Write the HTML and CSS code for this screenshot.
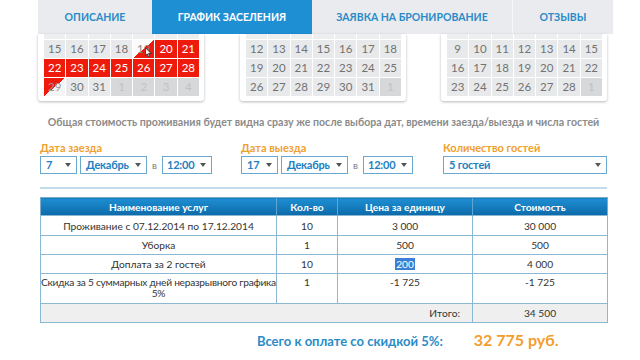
FILE: index.html
```html
<!DOCTYPE html>
<html lang="ru">
<head>
<meta charset="utf-8">
<title>График заселения</title>
<link rel="stylesheet" href="styles.css">
</head>
<body>
<div class="page">
  <nav class="tabs">
    <div class="tab t1">Описание</div>
    <div class="tab t2 active">График заселения</div>
    <div class="tab t3">Заявка на бронирование</div>
    <div class="tab t4">Отзывы</div>
  </nav>

  <div class="cals">
    <div class="cal">
      <div class="grid">
        <span class="d top"></span><span class="d top"></span><span class="d top"></span><span class="d top"></span><span class="d top"></span><span class="d top"></span><span class="d top"></span>
        <span class="d">15</span><span class="d">16</span><span class="d">17</span><span class="d">18</span><span class="d in">19<svg class="cursor" viewBox="0 0 8 12" width="7" height="11"><path d="M0.5 0.5 L0.5 9.5 L2.6 7.6 L4 11 L5.4 10.4 L4 7.2 L7 7.2 Z" fill="#fff" stroke="#222" stroke-width="0.9" stroke-linejoin="round"/></svg></span><span class="d busy">20</span><span class="d busy">21</span>
        <span class="d busy">22</span><span class="d busy">23</span><span class="d busy">24</span><span class="d busy">25</span><span class="d busy">26</span><span class="d busy">27</span><span class="d busy">28</span>
        <span class="d out">29</span><span class="d">30</span><span class="d">31</span><span class="d other">1</span><span class="d other">2</span><span class="d other">3</span><span class="d other">4</span>
      </div>
    </div>
    <div class="cal cal2">
      <div class="grid">
        <span class="d top"></span><span class="d top"></span><span class="d top"></span><span class="d top"></span><span class="d top"></span><span class="d top"></span><span class="d top"></span>
        <span class="d">12</span><span class="d">13</span><span class="d">14</span><span class="d">15</span><span class="d">16</span><span class="d">17</span><span class="d">18</span>
        <span class="d">19</span><span class="d">20</span><span class="d">21</span><span class="d">22</span><span class="d">23</span><span class="d">24</span><span class="d">25</span>
        <span class="d">26</span><span class="d">27</span><span class="d">28</span><span class="d">29</span><span class="d">30</span><span class="d">31</span><span class="d other">1</span>
      </div>
    </div>
    <div class="cal cal3">
      <div class="grid">
        <span class="d top"></span><span class="d top"></span><span class="d top"></span><span class="d top"></span><span class="d top"></span><span class="d top"></span><span class="d top"></span>
        <span class="d">9</span><span class="d">10</span><span class="d">11</span><span class="d">12</span><span class="d">13</span><span class="d">14</span><span class="d">15</span>
        <span class="d">16</span><span class="d">17</span><span class="d">18</span><span class="d">19</span><span class="d">20</span><span class="d">21</span><span class="d">22</span>
        <span class="d">23</span><span class="d">24</span><span class="d">25</span><span class="d">26</span><span class="d">27</span><span class="d">28</span><span class="d other">1</span>
      </div>
    </div>
  </div>

  <div class="content">
    <p class="note">Общая стоимость проживания будет видна сразу же после выбора дат, времени заезда/выезда и числа гостей</p>

    <div class="form">
      <div class="group g1">
        <div class="label">Дата заезда</div>
        <div class="fields">
          <div class="sel s-day">7</div>
          <div class="sel s-month">Декабрь</div>
          <span class="at">в</span>
          <div class="sel s-time">12:00</div>
        </div>
      </div>
      <div class="group g2">
        <div class="label">Дата выезда</div>
        <div class="fields">
          <div class="sel s-day">17</div>
          <div class="sel s-month">Декабрь</div>
          <span class="at">в</span>
          <div class="sel s-time">12:00</div>
        </div>
      </div>
      <div class="group g3">
        <div class="label">Количество гостей</div>
        <div class="fields">
          <div class="sel s-guests">5 гостей</div>
        </div>
      </div>
    </div>

    <div class="rule"></div>

    <table class="price">
      <thead>
        <tr><th class="c1">Наименование услуг</th><th class="c2">Кол-во</th><th class="c3">Цена за единицу</th><th class="c4">Стоимость</th></tr>
      </thead>
      <tbody>
        <tr class="r1"><td>Проживание с 07.12.2014 по 17.12.2014</td><td>10</td><td>3 000</td><td>30 000</td></tr>
        <tr class="r2"><td>Уборка</td><td>1</td><td>500</td><td>500</td></tr>
        <tr class="r2"><td>Доплата за 2 гостей</td><td>10</td><td><span class="hl">200</span></td><td>4 000</td></tr>
        <tr class="r4"><td class="wrap">Скидка за 5 суммарных дней неразрывного графика 5%</td><td>1</td><td>-1 725</td><td>-1 725</td></tr>
        <tr class="total"><td colspan="3" class="tlabel">Итого:</td><td>34 500</td></tr>
      </tbody>
    </table>

    <div class="sum">
      <span class="sum-label">Всего к оплате со скидкой 5%:</span>
      <span class="sum-value">32 775 руб.</span>
    </div>
  </div>
</div>
</body>
</html>
```

FILE: styles.css
```css
* { box-sizing: border-box; }
html, body { margin: 0; padding: 0; }
body {
  width: 640px;
  height: 360px;
  overflow: hidden;
  background: #fff;
  font-family: "Lato", "Noto Sans", sans-serif;
  color: #333;
}
.page { width: 640px; }

/* tabs */
.tabs {
  display: flex;
  margin-left: 38px;
  width: 575px;
  height: 34px;
  background: #e9ebee;
}
.tab {
  height: 34px;
  line-height: 34px;
  text-align: center;
  text-transform: uppercase;
  font-weight: 700;
  font-size: 10.5px;
  color: #2b8bc9;
}
.t1 { width: 114px; }
.t2 { width: 160px; }
.t3 { width: 201px; border-right: 1px solid #f6f7f8; }
.t4 { width: 100px; }
.tab.active { background: #1f8fd4; color: #fff; }

/* calendars */
.cals {
  display: flex;
  margin-left: 38px;
}
.cal {
  width: 166px;
  padding: 0 5px 5px 6px;
  background: #fff;
  box-shadow: 0 1px 3px rgba(0, 0, 0, 0.28);
  border-radius: 0 0 3px 3px;
}
.cal2 { margin-left: 36px; }
.cal3 { margin-left: 35px; }
.grid {
  display: grid;
  grid-template-columns: repeat(7, 1fr);
  grid-template-rows: 5px repeat(3, 18px);
  gap: 1px;
}
.d {
  position: relative;
  background: #e8e9eb;
  color: #727272;
  font-size: 11.5px;
  line-height: 18px;
  text-align: center;
}
.d.top { background: #eceef0; }
.d.busy { background: #ee1b0c; color: #fff; }
.d.other { background: #d7d8da; color: #c2c2c2; }
.d.in { background: linear-gradient(to bottom right, #fbfbfb 50%, #ee1b0c 50%); color: #888; }
.d.out { background: linear-gradient(to bottom right, #ee1b0c 50%, #f4f4f4 50%); color: #999; }
.cursor {
  position: absolute;
  left: 12px;
  top: 7px;
}

/* content */
.content {
  margin-left: 40px;
  width: 567px;
}
.note {
  margin: 14px 0 0;
  text-align: center;
  font-size: 10.6px;
  line-height: 14px;
  font-weight: 700;
  color: #8b8b8b;
  white-space: nowrap;
}
.form {
  display: flex;
  margin-top: 12px;
}
.g1 { width: 201px; }
.g2 { width: 202px; }
.g3 { width: 164px; }
.label {
  font-size: 11px;
  line-height: 14px;
  font-weight: 700;
  color: #f0a02c;
  margin-bottom: 1px;
}
.fields { display: flex; align-items: center; }
.sel {
  position: relative;
  height: 18px;
  border: 1px solid #6aa9cf;
  padding-left: 5px;
  font-size: 11px;
  letter-spacing: -0.2px;
  line-height: 16px;
  font-weight: 700;
  color: #1c80c2;
  background: #fff;
}
.sel::after {
  content: "";
  position: absolute;
  right: 5px;
  top: 6px;
  border-left: 3.5px solid transparent;
  border-right: 3.5px solid transparent;
  border-top: 4px solid #555;
}
.s-day { width: 37px; }
.s-month { width: 67px; margin-left: 3px; }
.s-time { width: 50px; padding-left: 4px; }
.s-guests { width: 164px; }
.at {
  width: 15px;
  text-align: center;
  font-size: 10px;
  color: #777;
}

.rule {
  margin-top: 13px;
  height: 2px;
  background: #c3dcea;
}

/* table */
.price {
  margin-top: 8px;
  width: 567px;
  border-collapse: collapse;
  border: 1px solid #79adcb;
  font-size: 10.2px;
  text-align: center;
  table-layout: fixed;
}
.price th {
  height: 18px;
  padding: 0;
  background: linear-gradient(#1e8fd3, #0d6aa9);
  color: #fff;
  font-weight: 700;
  border-left: 1px solid #5fa6d2;
}
.price th:first-child { border-left: none; }
.c1 { width: 236px; }
.c2 { width: 61px; }
.c3 { width: 135px; }
.c4 { width: 135px; }
.price td {
  padding: 0 2px;
  border: 1px solid #8bb8d2;
  color: #333;
}
.r1 td { height: 20px; }
.r2 td { height: 19px; }
.r4 td { height: 30px; vertical-align: top; padding-top: 3px; line-height: 11px; }
.r4 td.wrap { padding: 3px 0 0; letter-spacing: -0.25px; }
.total td { height: 19px; background: #efefef; }
.total .tlabel { text-align: right; padding-right: 12px; }
.hl { background: #3a7fd8; color: #fff; padding: 0 1px; }

.sum {
  display: flex;
  align-items: baseline;
  margin-left: 217px;
  margin-top: 7px;
  gap: 31px;
}
.sum-label {
  font-size: 13px;
  font-weight: 700;
  color: #2a8cc7;
}
.sum-value {
  font-size: 16px;
  font-weight: 700;
  color: #f39d2c;
}
```
